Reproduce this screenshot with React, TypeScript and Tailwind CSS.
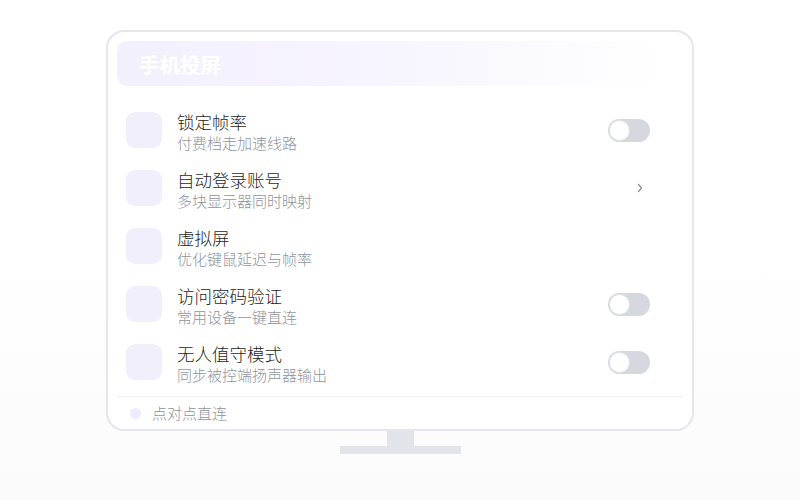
const rows = [
  { title: '锁定帧率', sub: '付费档走加速线路', action: 'toggle' },
  { title: '自动登录账号', sub: '多块显示器同时映射', action: 'chevron' },
  { title: '虚拟屏', sub: '优化键鼠延迟与帧率', action: 'none' },
  { title: '访问密码验证', sub: '常用设备一键直连', action: 'toggle' },
  { title: '无人值守模式', sub: '同步被控端扬声器输出', action: 'toggle' },
];

function Toggle() {
  return (
    <div className="w-[42px] h-[23px] rounded-full bg-[#d5d8de] p-[2px] flex items-center">
      <div className="w-[19px] h-[19px] rounded-full bg-white shadow-[0_0_0_1px_#e3e5ea]" />
    </div>
  );
}

export default function App() {
  return (
    <div
      className="w-[800px] h-[500px] bg-gradient-to-b from-white via-white to-[#fbfbfb] flex flex-col items-center pt-[30px]"
      style={{ fontFamily: '"Noto Sans CJK SC", "Noto Sans", sans-serif' }}
    >
      {/* Monitor */}
      <div className="w-[588px] h-[401px] rounded-[18px] border-2 border-[#e5e7eb] bg-white px-[9px] pt-[9px] flex flex-col">
        {/* Header */}
        <div className="h-[45px] rounded-[10px] bg-gradient-to-r from-[#f3f0fe] via-[#f7f5fe] to-white/0 flex items-center pl-[22px] mr-[18px]">
          <span className="text-white text-[20.5px] font-bold mt-[1px]">手机投屏</span>
        </div>

        {/* Rows */}
        <div className="mt-[15px] flex flex-col">
          {rows.map((r, i) => (
            <div key={i} className="h-[58px] flex items-center pl-[9px] pr-[33px]">
              <div className="w-9 h-9 rounded-[9px] bg-[#f2effd] shrink-0" />
              <div className="ml-[15px] mt-[3px] flex-1 flex flex-col font-light">
                <span className="text-[17.5px] leading-[21px] text-[#1f1f23]">{r.title}</span>
                <span className="text-[15px] leading-[20px] mt-[1px] text-[#8f949d]">{r.sub}</span>
              </div>
              {r.action === 'toggle' && <Toggle />}
              {r.action === 'chevron' && (
                <svg width="8" height="10" viewBox="0 0 8 10" className="mr-[6px]">
                  <path d="M2.5 1.5 L5.5 5 L2.5 8.5" fill="none" stroke="#8a8f99" strokeWidth="1.3" strokeLinecap="round" strokeLinejoin="round" />
                </svg>
              )}
            </div>
          ))}
        </div>

        {/* Footer */}
        <div className="mt-[5px] border-t border-[#eef0f3] flex items-center h-[33px] pl-[13px]">
          <div className="w-[11px] h-[11px] rounded-full bg-[#eeebfc]" />
          <span className="ml-[11px] text-[15px] font-light text-[#8f949d]">点对点直连</span>
        </div>
      </div>

      {/* Stand */}
      <div className="w-[27px] h-[15px] bg-[#e1e5ea]" />
      <div className="w-[121px] h-[8px] bg-[#e1e5ea]" />
    </div>
  );
}
